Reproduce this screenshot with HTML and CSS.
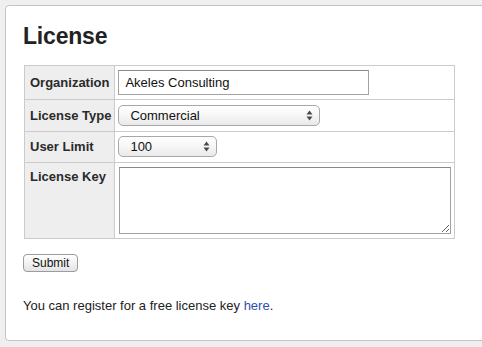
FILE: index.html
```
<!DOCTYPE html>
<html lang="en">

<head>
    <meta charset="UTF-8">
    <meta name="viewport" content="width=device-width, initial-scale=1.0">
    <title>License</title>

    <link rel="stylesheet" href="styles.css">
</head>

<body>

    <div class="panel">
        <h1>License</h1>

        <form name="licenseform" method="POST" action="">
            <table class="license-table">
                <tr class="row-org">
                    <th>Organization</th>
                    <td><input type="text" name="organization" class="text-field" value="Akeles Consulting"></td>
                </tr>
                <tr class="row-type">
                    <th>License Type</th>
                    <td>
                        <span class="select-box type-select">
                            <select name="licenseType">
                                <option>Commercial</option>
                                <option>Evaluation</option>
                                <option>Academic</option>
                            </select>
                            <svg class="arrows" width="7" height="11" viewBox="0 0 7 11"><path d="M3.5 0.5 L6.5 4.5 L0.5 4.5 Z M0.5 6.5 L6.5 6.5 L3.5 10.5 Z" fill="#4a4a4a"/></svg>
                        </span>
                    </td>
                </tr>
                <tr class="row-limit">
                    <th>User Limit</th>
                    <td>
                        <span class="select-box limit-select">
                            <select name="userLimit">
                                <option>100</option>
                                <option>250</option>
                                <option>500</option>
                            </select>
                            <svg class="arrows" width="7" height="11" viewBox="0 0 7 11"><path d="M3.5 0.5 L6.5 4.5 L0.5 4.5 Z M0.5 6.5 L6.5 6.5 L3.5 10.5 Z" fill="#4a4a4a"/></svg>
                        </span>
                    </td>
                </tr>
                <tr class="row-key">
                    <th>License Key</th>
                    <td><textarea name="licenseKey" class="key-field"></textarea></td>
                </tr>
            </table>

            <input type="submit" class="submit-btn" value="Submit">
        </form>

        <p class="register">You can register for a free license key <a href="#">here</a>.</p>
    </div>

</body>

</html>
```

FILE: styles.css
```
body {
    margin: 0;
    padding: 5px 0 0 5px;
    background-color: #efefef;
    font-family: "Liberation Sans", Arial, sans-serif;
    color: #222;
    overflow: hidden;
}

.panel {
    width: 520px;
    background-color: #fff;
    border: 1px solid #c4c4c4;
    border-radius: 4px;
    padding: 0 18px 27px;
}

h1 {
    font-size: 23px;
    line-height: 28px;
    letter-spacing: -0.2px;
    margin: 16px 0 15px -1px;
    color: #222;
}

.license-table {
    border-collapse: collapse;
    width: 430px;
    font-size: 13px;
}

.license-table th,
.license-table td {
    border: 1px solid #cbcbcb;
    vertical-align: baseline;
}

.license-table th {
    width: 82px;
    background-color: #eee;
    text-align: left;
    padding: 4px 3px 4px 5px;
    white-space: nowrap;
    color: #2a2a2a;
}

.license-table td {
    padding: 4px 3px;
}

.row-key th,
.row-key td {
    vertical-align: top;
}

.row-key th {
    padding-top: 6px;
}

.text-field {
    box-sizing: border-box;
    width: 251px;
    height: 25px;
    margin: 0;
    padding: 0 6px;
    border: 1px solid #a3a3a3;
    border-top-color: #8a8a8a;
    font-family: "Liberation Sans", Arial, sans-serif;
    font-size: 13px;
    color: #111;
}

.select-box {
    position: relative;
    display: inline-block;
}

.select-box select {
    appearance: none;
    -webkit-appearance: none;
    box-sizing: border-box;
    height: 21px;
    margin: 1px 0;
    padding: 0 20px 0 11px;
    border: 1px solid #a8a8a8;
    border-radius: 5px;
    background-image: linear-gradient(#fff, #f6f6f6 50%, #e9e9e9);
    font-family: "Liberation Sans", Arial, sans-serif;
    font-size: 13px;
    color: #111;
}

.type-select select {
    width: 202px;
}

.limit-select select {
    width: 99px;
    margin: 0 0 1px;
}

.arrows {
    position: absolute;
    right: 7px;
    top: 6px;
    pointer-events: none;
}

.limit-select .arrows {
    top: 5px;
}

.key-field {
    box-sizing: border-box;
    display: block;
    width: 332px;
    height: 67px;
    margin: 0 0 0 1px;
    border: 1px solid #a0a0a0;
    border-top-color: #888;
    font-family: "Liberation Sans", Arial, sans-serif;
    font-size: 13px;
}

.submit-btn {
    display: block;
    height: 18px;
    margin: 15px 0 0 -1px;
    padding: 0 8px;
    border: 1px solid #9c9c9c;
    border-radius: 4px;
    background-image: linear-gradient(#fff, #f2f2f2 50%, #e4e4e4);
    font-family: "Liberation Sans", Arial, sans-serif;
    font-size: 12px;
    color: #111;
}

.register {
    margin: 26px 0 0 -1px;
    font-size: 13px;
    line-height: 15px;
}

.register a {
    color: #2d4fae;
    text-decoration: none;
}
```
